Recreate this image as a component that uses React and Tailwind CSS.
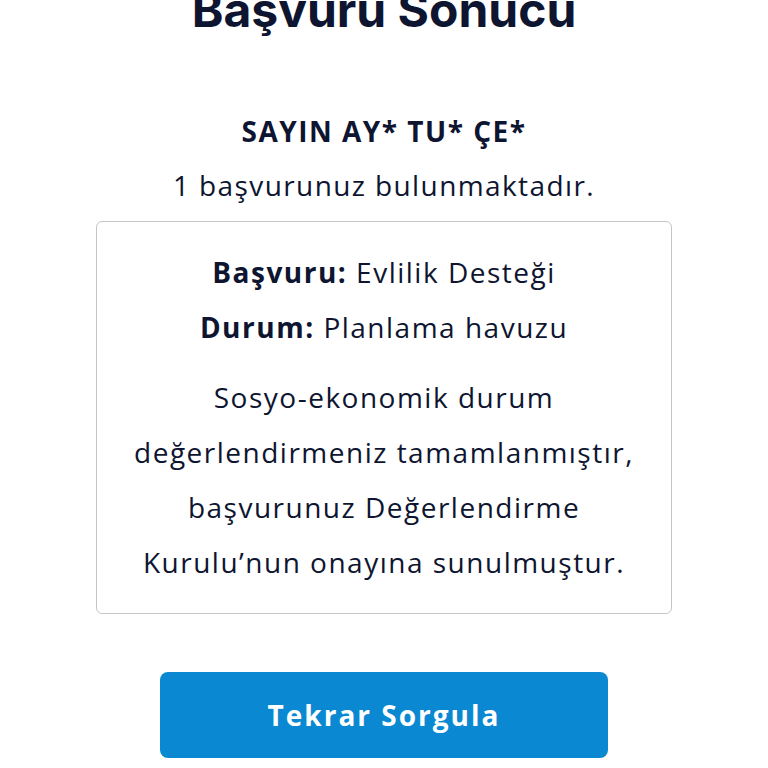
export default function App() {
  const body = { fontFamily: '"Open Sans", "Noto Sans", sans-serif' };
  return (
    <div className="min-h-screen w-full bg-white flex flex-col items-center overflow-hidden text-[#0e1530]" style={body}>
      <h1
        className="-mt-[14px] text-[48px] leading-[48px] font-bold text-[#0e1530]"
        style={{ fontFamily: 'Inter, "Liberation Sans", sans-serif' }}
      >
        Başvuru Sonucu
      </h1>
      <p className="mt-[70px] text-[28px] leading-[54px] font-bold tracking-[1.5px]">SAYIN AY* TU* ÇE*</p>
      <p className="text-[28px] leading-[54px] tracking-[1.4px]">1 başvurunuz bulunmaktadır.</p>
      <div className="mt-[9px] w-[576px] rounded-[6px] border border-[#c6c6c6] px-2 pt-[23px] pb-[23px] text-center text-[28px] leading-[55px] tracking-[1.5px]">
        <p><span className="font-bold">Başvuru:</span> Evlilik Desteği</p>
        <p><span className="font-bold">Durum:</span> Planlama havuzu</p>
        <p className="mt-[15px]">
          Sosyo-ekonomik durum
          <br />
          değerlendirmeniz tamamlanmıştır,
          <br />
          başvurunuz Değerlendirme
          <br />
          Kurulu’nun onayına sunulmuştur.
        </p>
      </div>
      <button className="mt-[58px] flex h-[86px] w-[448px] items-center justify-center rounded-[8px] bg-[#0a89d2] text-[28px] font-bold tracking-[2px] text-white">
        Tekrar Sorgula
      </button>
    </div>
  );
}
